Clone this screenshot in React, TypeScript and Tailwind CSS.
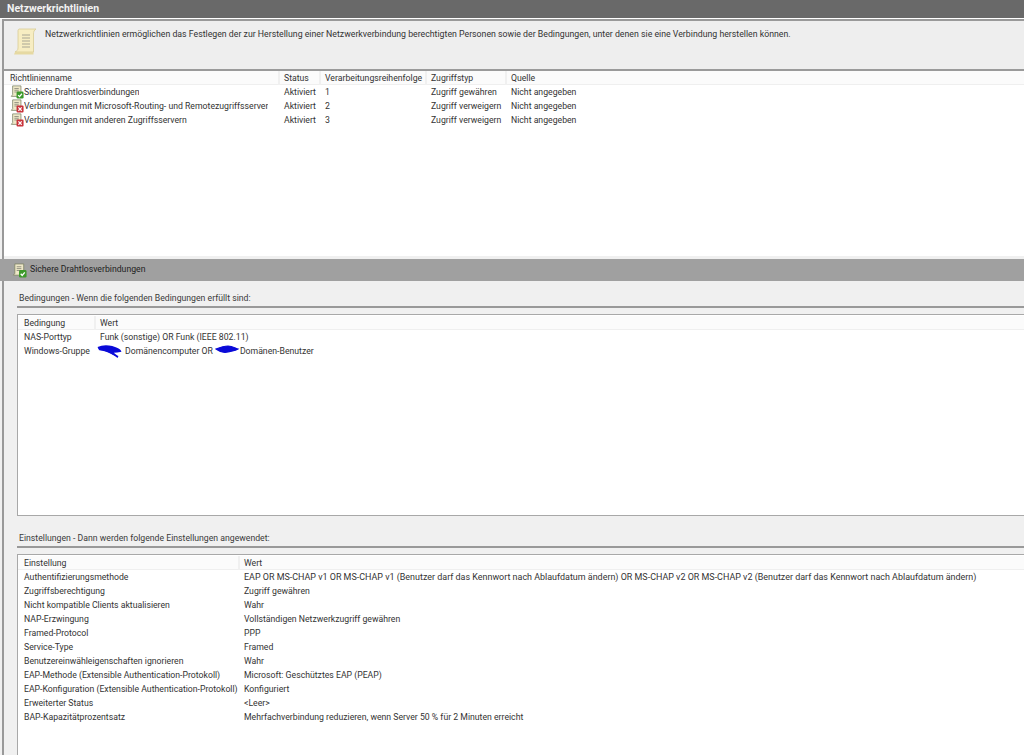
const font = "font-['Roboto',sans-serif]";

function ScrollIcon({ status, size = 16 }: { status?: 'ok' | 'deny'; size?: number }) {
  return (
    <svg width={size} height={size} viewBox="0 0 16 16" className="shrink-0">
      <path d="M3 1h9.500v12H1.500l1.500-2z" fill="#eee8c8" stroke="#7f8468" strokeWidth="0.9" />
      <path d="M5 4h5M5 6h5M5 8h5" stroke="#77776c" strokeWidth="0.8" />
      {status === 'ok' && (
        <>
          <rect x="7.500" y="7.500" width="8" height="8" rx="1.500" fill="#3c9a2a" />
          <path d="M9.300 11.500l1.600 1.800 2.700-3.300" fill="none" stroke="#fff" strokeWidth="1.400" />
        </>
      )}
      {status === 'deny' && (
        <>
          <rect x="7.500" y="7.500" width="8" height="8" rx="1.200" fill="#c8323a" />
          <path d="M9.600 9.600l3.800 3.800M13.400 9.600l-3.800 3.800" stroke="#fff" strokeWidth="1.400" />
        </>
      )}
    </svg>
  );
}

function BigScroll() {
  return (
    <svg width="24" height="28" viewBox="0 0 24 28" className="shrink-0">
      <path d="M6 1h17c-2 1-2.500 3-2.500 5v18H2c2-1 3-2 3-4V4c0-1.500 0-2.500 1-3z" fill="#f7edc2" stroke="#d8cc96" strokeWidth="0.8" />
      <path d="M2 24h18.500v2.500H1z" fill="#e6d9a2" />
      <path d="M9 7h8M9 10h8M9 13h8M9 16h8M9 19h8" stroke="#a9a695" strokeWidth="1" />
    </svg>
  );
}

function ScribbleA() {
  return (
    <svg width="25" height="14" viewBox="0 0 25 14" className="shrink-0">
      <path d="M1 4c4-2 10-2 14-1 3 1 7 2 8 4-4 1-8 1-12 0-3-1-6-1-9-2 5 0 10 2 13 4 2 1 4 3 6 4" fill="#0a0ad8" stroke="#0a0ad8" strokeWidth="2" />
    </svg>
  );
}

function ScribbleB() {
  return (
    <svg width="25" height="14" viewBox="0 0 25 14" className="shrink-0">
      <path d="M1 5c5-2 8-3 12-3 4 0 7 2 10 3-3 2-7 2-10 3-4 1-8 0-12-3z" fill="#0a0ad8" stroke="#0a0ad8" strokeWidth="1.200" />
    </svg>
  );
}

function SectionLabel({ children }: { children: string }) {
  return <div className="h-[15px] pl-[15px] text-[#3a3a3a] leading-[15px]">{children}</div>;
}

const policies = [
  { name: 'Sichere Drahtlosverbindungen', status: 'ok' as const, order: '1', access: 'Zugriff gewähren' },
  { name: 'Verbindungen mit Microsoft-Routing- und Remotezugriffsserver', status: 'deny' as const, order: '2', access: 'Zugriff verweigern' },
  { name: 'Verbindungen mit anderen Zugriffsservern', status: 'deny' as const, order: '3', access: 'Zugriff verweigern' },
];

const settings = [
  ['Authentifizierungsmethode', 'EAP OR MS-CHAP v1 OR MS-CHAP v1 (Benutzer darf das Kennwort nach Ablaufdatum ändern) OR MS-CHAP v2 OR MS-CHAP v2 (Benutzer darf das Kennwort nach Ablaufdatum ändern)'],
  ['Zugriffsberechtigung', 'Zugriff gewähren'],
  ['Nicht kompatible Clients aktualisieren', 'Wahr'],
  ['NAP-Erzwingung', 'Vollständigen Netzwerkzugriff gewähren'],
  ['Framed-Protocol', 'PPP'],
  ['Service-Type', 'Framed'],
  ['Benutzereinwähleigenschaften ignorieren', 'Wahr'],
  ['EAP-Methode (Extensible Authentication-Protokoll)', 'Microsoft: Geschütztes EAP (PEAP)'],
  ['EAP-Konfiguration (Extensible Authentication-Protokoll)', 'Konfiguriert'],
  ['Erweiterter Status', '<Leer>'],
  ['BAP-Kapazitätprozentsatz', 'Mehrfachverbindung reduzieren, wenn Server 50 % für 2 Minuten erreicht'],
];

function HeaderCell({ children, className = '' }: { children: string; className?: string }) {
  return <div className={`border-r-2 border-[#f0f0f0] whitespace-nowrap ${className}`}>{children}</div>;
}

export default function App() {
  return (
    <div className={`w-[1024px] h-[755px] overflow-hidden bg-[#f0f0f0] text-[8.7px] text-[#333] ${font}`}>
      <div className="h-[18px] bg-[#696969] pl-[7px] text-[10.5px] text-[#f2f2f2] font-bold leading-[17px]">Netzwerkrichtlinien</div>
      <div className="h-px bg-white" />
      <div className="ml-[2px] border-l-2 border-t-2 border-[#999] h-[237px] flex flex-col">
        <div className="h-[48px] flex items-start pl-[9px] pt-[7px] gap-[8px] bg-[#eeeeee]">
          <BigScroll />
          <div className="leading-[13px] text-[8.75px]">
            Netzwerkrichtlinien ermöglichen das Festlegen der zur Herstellung einer Netzwerkverbindung berechtigten Personen sowie der Bedingungen, unter denen sie eine Verbindung herstellen können.
          </div>
        </div>
        <div className="h-[2px] bg-[#9a9a9a]" />
        <div className="flex-1 bg-white">
          <div className="h-[14px] bg-[#fbfbfb] grid grid-cols-[272px_41px_106px_80px_1fr] pl-[4px] leading-[14px] border-b border-[#efefef]">
            <HeaderCell className="pl-[2px]">Richtlinienname</HeaderCell>
            <HeaderCell className="pl-[4px]">Status</HeaderCell>
            <HeaderCell className="pl-[4px]">Verarbeitungsreihenfolge</HeaderCell>
            <HeaderCell className="pl-[4px]">Zugriffstyp</HeaderCell>
            <div className="pl-[4px]">Quelle</div>
          </div>
          {policies.map((p) => (
            <div key={p.name} className="h-[14px] grid grid-cols-[272px_41px_106px_80px_1fr] pl-[4px] leading-[14px]">
              <div className="flex items-center gap-0 pl-[2px]">
                <ScrollIcon status={p.status} size={14} />
                <span className="truncate">{p.name}</span>
              </div>
              <div className="pl-[4px]">Aktiviert</div>
              <div className="pl-[4px]">{p.order}</div>
              <div className="pl-[4px] whitespace-nowrap">{p.access}</div>
              <div className="pl-[4px]">Nicht angegeben</div>
            </div>
          ))}
        </div>
      </div>
      <div className="ml-[2px] h-[3px] border-l-2 border-[#999] bg-[#f0f0f0]" />
      <div className="h-[22px] bg-[#a0a0a0] flex items-center pl-[12px] gap-[3px] text-[#222]">
        <ScrollIcon status="ok" size={15} />
        <span>Sichere Drahtlosverbindungen</span>
      </div>
      <div className="ml-[2px] border-l-2 border-[#999] h-[475px] pt-[10px]">
        <SectionLabel>Bedingungen - Wenn die folgenden Bedingungen erfüllt sind:</SectionLabel>
        <div className="h-[2px] bg-[#999] ml-[13px]" />
        <div className="ml-[13px] mt-[6px] h-[202px] bg-white border border-r-0 border-[#a8a8a8]">
          <div className="h-[14px] mt-px grid grid-cols-[74px_1fr] pl-[4px] leading-[14px] bg-[#fbfbfb] border-b border-[#efefef]">
            <HeaderCell className="pl-[2px]">Bedingung</HeaderCell>
            <div className="pl-[4px]">Wert</div>
          </div>
          <div className="h-[14px] grid grid-cols-[74px_1fr] pl-[4px] leading-[14px]">
            <div className="pl-[2px]">NAS-Porttyp</div>
            <div className="pl-[4px]">Funk (sonstige) OR Funk (IEEE 802.11)</div>
          </div>
          <div className="h-[14px] grid grid-cols-[74px_1fr] pl-[4px] leading-[14px]">
            <div className="pl-[2px] whitespace-nowrap">Windows-Gruppe</div>
            <div className="pl-[1px] flex">
              <ScribbleA />
              <span className="ml-[3px] mr-[2px]">Domänencomputer OR</span>
              <ScribbleB />
              <span>Domänen-Benutzer</span>
            </div>
          </div>
        </div>
        <div className="mt-[15px]">
          <SectionLabel>Einstellungen - Dann werden folgende Einstellungen angewendet:</SectionLabel>
        </div>
        <div className="h-[2px] bg-[#999] ml-[13px]" />
        <div className="ml-[13px] mt-[6px] h-[210px] bg-white border border-r-0 border-[#a8a8a8]">
          <div className="h-[14px] mt-px grid grid-cols-[218px_1fr] pl-[4px] leading-[14px] bg-[#fbfbfb] border-b border-[#efefef]">
            <HeaderCell className="pl-[2px]">Einstellung</HeaderCell>
            <div className="pl-[4px]">Wert</div>
          </div>
          {settings.map(([k, v], i) => (
            <div key={k} className="h-[14px] grid grid-cols-[218px_1fr] pl-[4px] leading-[14px]">
              <div className="pl-[2px] whitespace-nowrap">{k}</div>
              <div className={`pl-[4px] whitespace-nowrap ${i === 0 ? 'text-[8.95px]' : ''}`}>{v}</div>
            </div>
          ))}
        </div>
      </div>
    </div>
  );
}
